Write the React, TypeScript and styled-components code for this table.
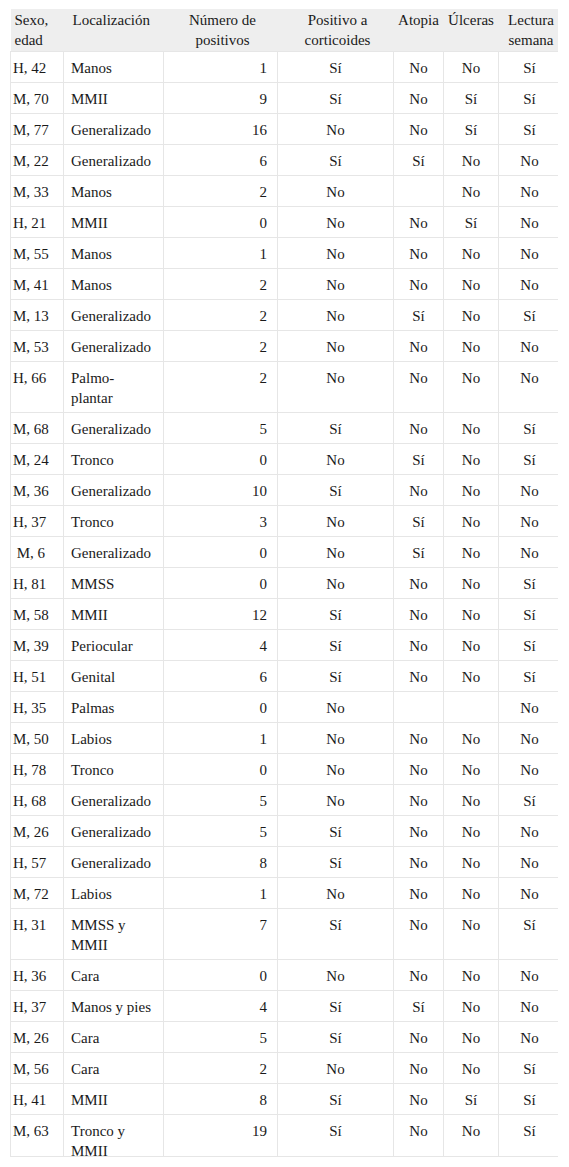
import React from "react";
import styled, { createGlobalStyle } from "styled-components";

const GlobalStyle = createGlobalStyle`
  html, body { margin: 0; padding: 0; background: #ffffff; }
  body { font-family: "Liberation Serif", "Times New Roman", serif; color: #222; }
`;

type Align = "left" | "center" | "right";

interface Column {
  title: string;
  width: number;
  align: Align;
  headAlign: Align;
  pl: number;
  pr: number;
  hpl: number;
}

const columns: Column[] = [
  { title: "Sexo, edad", width: 53, align: "left", headAlign: "left", pl: 2, pr: 2, hpl: 4 },
  { title: "Localización", width: 100, align: "left", headAlign: "left", pl: 7, pr: 8, hpl: 9 },
  { title: "Número de positivos", width: 114, align: "right", headAlign: "center", pl: 5, pr: 10, hpl: 5 },
  { title: "Positivo a corticoides", width: 116, align: "center", headAlign: "center", pl: 5, pr: 5, hpl: 5 },
  { title: "Atopia", width: 50, align: "center", headAlign: "center", pl: 2, pr: 2, hpl: 1 },
  { title: "Úlceras", width: 55, align: "center", headAlign: "center", pl: 2, pr: 2, hpl: 1 },
  { title: "Lectura semana", width: 60, align: "center", headAlign: "center", pl: 4, pr: 2, hpl: 6 },
];

const rows: string[][] = [
  ["H, 42", "Manos", "1", "Sí", "No", "No", "Sí"],
  ["M, 70", "MMII", "9", "Sí", "No", "Sí", "Sí"],
  ["M, 77", "Generalizado", "16", "No", "No", "Sí", "Sí"],
  ["M, 22", "Generalizado", "6", "Sí", "Sí", "No", "No"],
  ["M, 33", "Manos", "2", "No", "", "No", "No"],
  ["H, 21", "MMII", "0", "No", "No", "Sí", "No"],
  ["M, 55", "Manos", "1", "No", "No", "No", "No"],
  ["M, 41", "Manos", "2", "No", "No", "No", "No"],
  ["M, 13", "Generalizado", "2", "No", "Sí", "No", "Sí"],
  ["M, 53", "Generalizado", "2", "No", "No", "No", "No"],
  ["H, 66", "Palmo-plantar", "2", "No", "No", "No", "No"],
  ["M, 68", "Generalizado", "5", "Sí", "No", "No", "Sí"],
  ["M, 24", "Tronco", "0", "No", "Sí", "No", "Sí"],
  ["M, 36", "Generalizado", "10", "Sí", "No", "No", "No"],
  ["H, 37", "Tronco", "3", "No", "Sí", "No", "No"],
  ["\u00a0M, 6", "Generalizado", "0", "No", "Sí", "No", "No"],
  ["H, 81", "MMSS", "0", "No", "No", "No", "Sí"],
  ["M, 58", "MMII", "12", "Sí", "No", "No", "Sí"],
  ["M, 39", "Periocular", "4", "Sí", "No", "No", "Sí"],
  ["H, 51", "Genital", "6", "Sí", "No", "No", "Sí"],
  ["H, 35", "Palmas", "0", "No", "", "", "No"],
  ["M, 50", "Labios", "1", "No", "No", "No", "No"],
  ["H, 78", "Tronco", "0", "No", "No", "No", "No"],
  ["H, 68", "Generalizado", "5", "No", "No", "No", "Sí"],
  ["M, 26", "Generalizado", "5", "Sí", "No", "No", "No"],
  ["H, 57", "Generalizado", "8", "Sí", "No", "No", "No"],
  ["M, 72", "Labios", "1", "No", "No", "No", "No"],
  ["H, 31", "MMSS y MMII", "7", "Sí", "No", "No", "Sí"],
  ["H, 36", "Cara", "0", "No", "No", "No", "No"],
  ["H, 37", "Manos y pies", "4", "Sí", "Sí", "No", "No"],
  ["M, 26", "Cara", "5", "Sí", "No", "No", "No"],
  ["M, 56", "Cara", "2", "No", "No", "No", "Sí"],
  ["H, 41", "MMII", "8", "Sí", "No", "Sí", "Sí"],
  ["M, 63", "Tronco y MMII", "19", "Sí", "No", "No", "Sí"],
];

const Page = styled.div`
  padding: 9px 11px 0 10px;
`;

const Scroller = styled.div`
  width: 548px;
  height: 1147px;
  overflow: hidden;
  border-bottom: 1px solid #e6e6e6;
`;

const Table = styled.table`
  width: 548px;
  table-layout: fixed;
  border-collapse: collapse;
  font-family: "Liberation Serif", "Times New Roman", serif;
  font-size: 15px;
  line-height: 20px;
  color: #1a1a1a;
`;

const Th = styled.th<{ $align: Align; $pl: number }>`
  background: #eeeeee;
  font-weight: normal;
  vertical-align: top;
  text-align: ${(p) => p.$align};
  padding: 1px 1px 1px ${(p) => p.$pl}px;
  border: none;
`;

const Td = styled.td<{ $align: Align; $pl: number; $pr: number }>`
  vertical-align: top;
  text-align: ${(p) => p.$align};
  padding: 6px ${(p) => p.$pr}px 4px ${(p) => p.$pl}px;
  border: 1px solid #e6e6e6;
`;

export default function App() {
  return (
    <>
      <GlobalStyle />
      <Page>
        <Scroller>
          <Table>
            <colgroup>
              {columns.map((c) => (
                <col key={c.title} style={{ width: c.width }} />
              ))}
            </colgroup>
            <thead>
              <tr>
                {columns.map((c) => (
                  <Th key={c.title} $align={c.headAlign} $pl={c.hpl}>
                    {c.title}
                  </Th>
                ))}
              </tr>
            </thead>
            <tbody>
              {rows.map((r, i) => (
                <tr key={i}>
                  {r.map((v, j) => (
                    <Td key={j} $align={columns[j].align} $pl={columns[j].pl} $pr={columns[j].pr}>
                      {v}
                    </Td>
                  ))}
                </tr>
              ))}
            </tbody>
          </Table>
        </Scroller>
      </Page>
    </>
  );
}
